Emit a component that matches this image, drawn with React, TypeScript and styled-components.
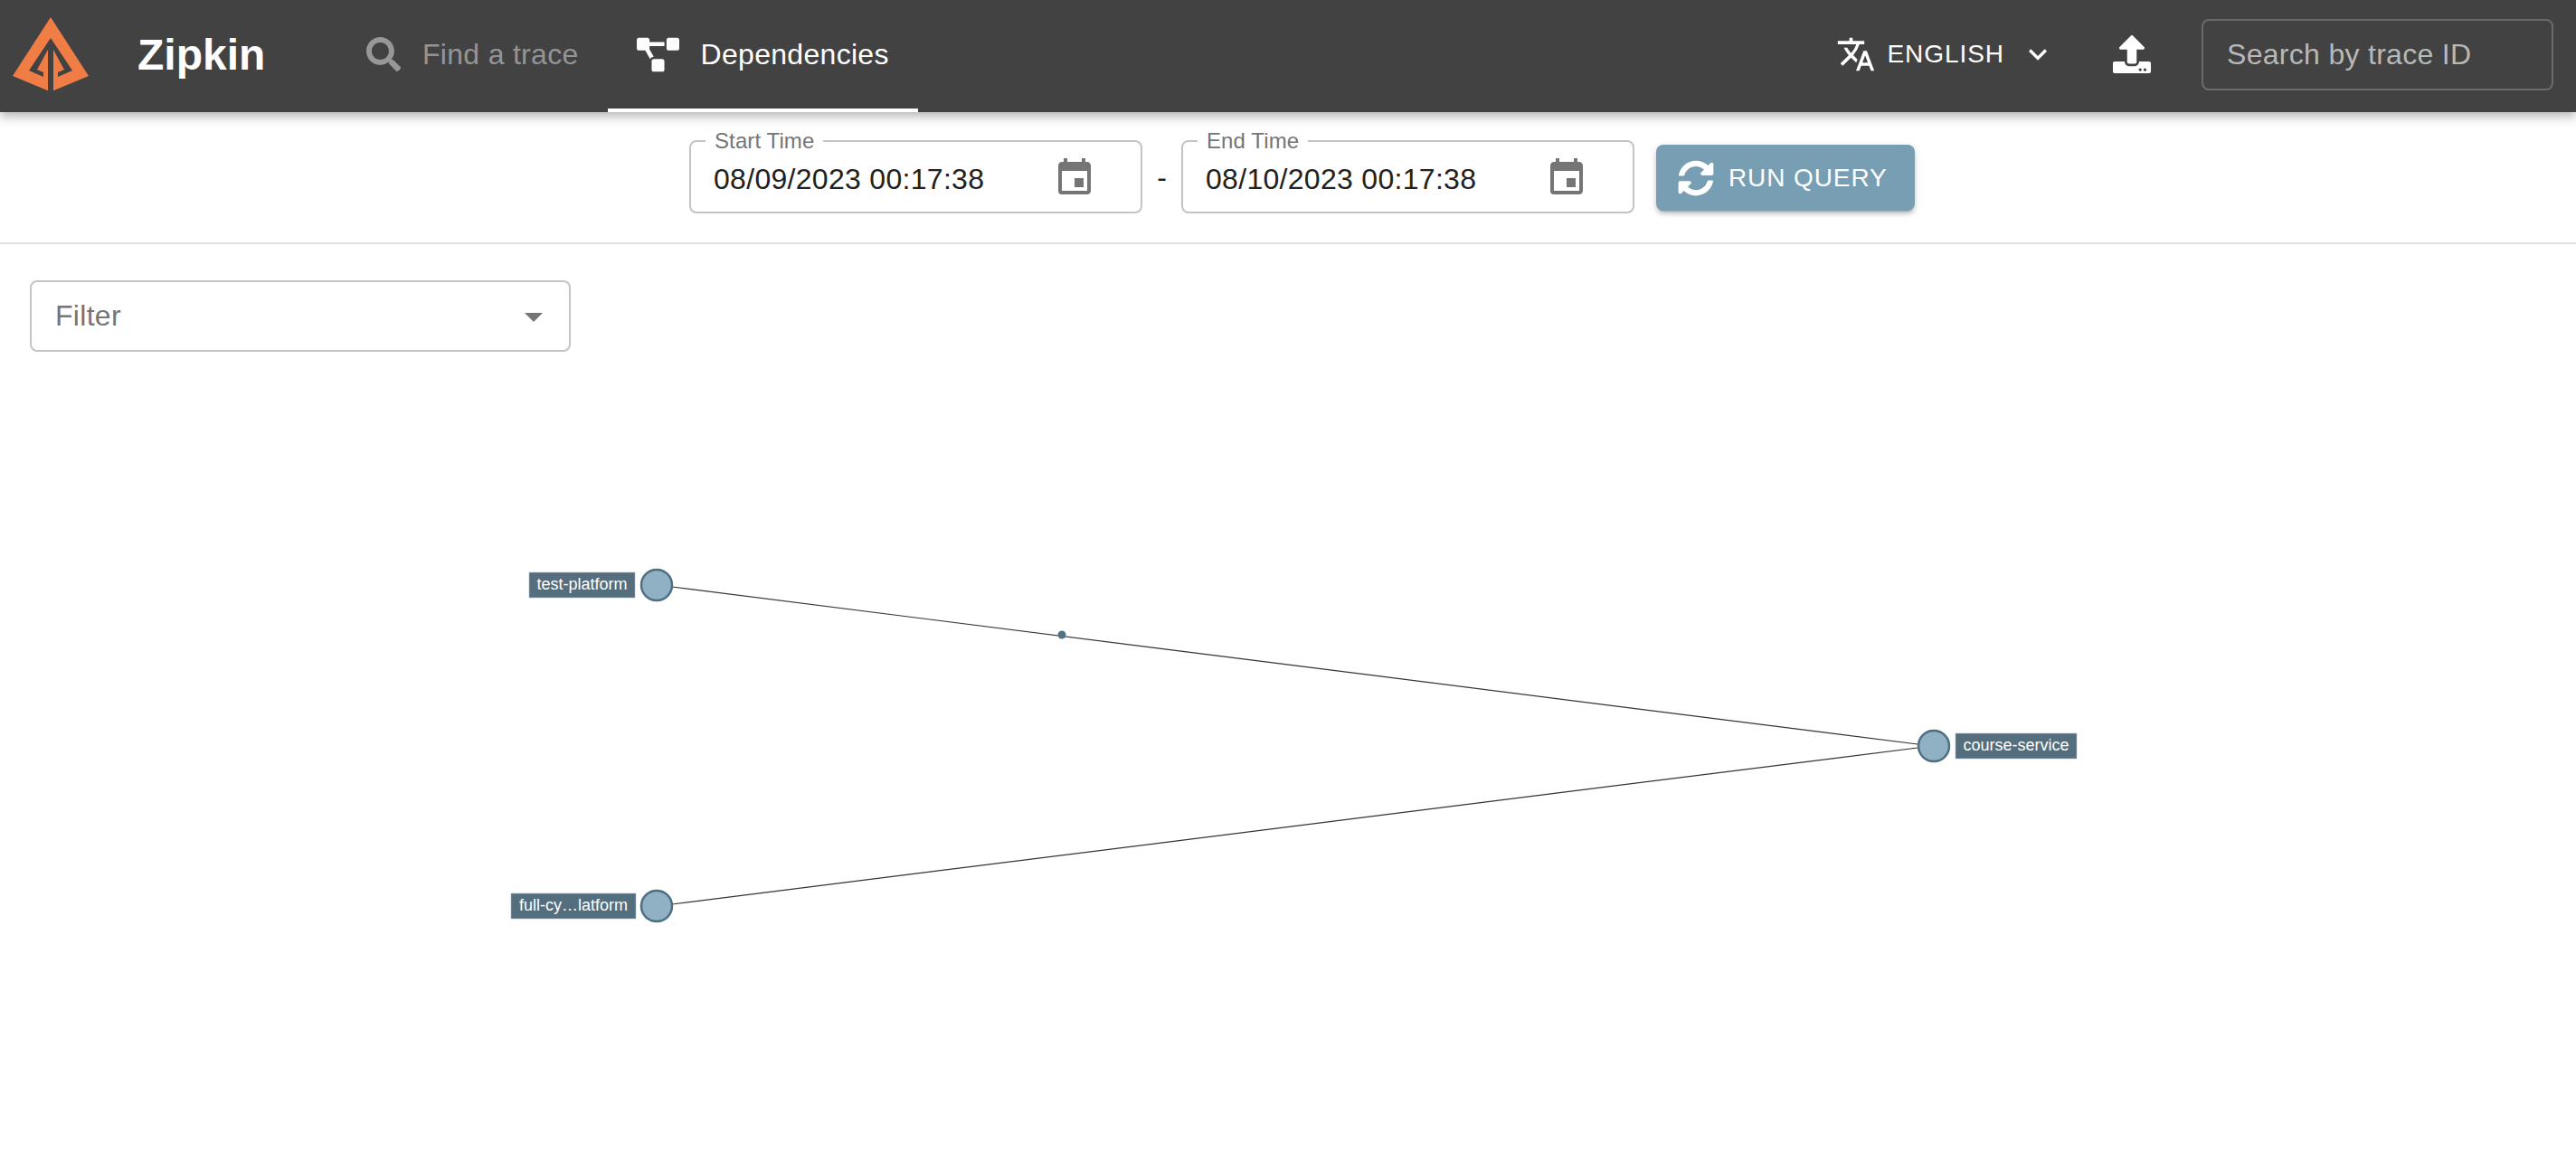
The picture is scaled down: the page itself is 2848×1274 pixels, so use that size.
import React from "react";
import styled, { createGlobalStyle } from "styled-components";
import { FaSearch, FaProjectDiagram, FaUpload, FaSyncAlt } from "react-icons/fa";
import { MdTranslate, MdEvent, MdArrowDropDown, MdExpandMore } from "react-icons/md";

const Global = createGlobalStyle`
  html, body { margin: 0; padding: 0; background: #fff; }
  body { font-family: "Liberation Sans", Arial, sans-serif; width: 2848px; height: 1274px; overflow: hidden; }
  * { box-sizing: border-box; }
`;

const Page = styled.div`
  width: 2848px;
  height: 1274px;
  display: flex;
  flex-direction: column;
`;

const Header = styled.header`
  height: 124px;
  flex: none;
  background: #424242;
  display: flex;
  align-items: stretch;
  padding-right: 25px;
  box-shadow: 0 4px 8px -2px rgba(0, 0, 0, 0.2), 0 8px 10px 1px rgba(0, 0, 0, 0.12);
  position: relative;
  z-index: 1;
`;

const LogoMark = styled.svg`
  width: 112px;
  height: 112px;
  flex: none;
  display: block;
`;

const Brand = styled.div`
  display: flex;
  align-items: center;
  color: #fff;
  font-size: 48px;
  font-weight: 700;
  margin-left: 40px;
  padding-bottom: 4px;
  width: 139px;
  white-space: nowrap;
`;

const Tabs = styled.nav`
  display: flex;
  margin-left: 82px;
`;

const Tab = styled.div<{ $active?: boolean }>`
  display: flex;
  align-items: center;
  gap: 24px;
  padding: 0 32px;
  font-size: 32px;
  letter-spacing: 0.3px;
  white-space: nowrap;
  color: ${(p) => (p.$active ? "#fff" : "rgba(255,255,255,0.45)")};
  border-bottom: 4px solid ${(p) => (p.$active ? "#fff" : "transparent")};
`;

const RightGroup = styled.div`
  margin-left: auto;
  display: flex;
  align-items: center;
  padding-bottom: 4px;
`;

const Language = styled.div`
  display: flex;
  align-items: center;
  color: #fff;
  font-size: 28px;
  letter-spacing: 0.95px;
  white-space: nowrap;
`;

const LangText = styled.span`
  margin-left: 12px;
`;

const LangCaret = styled.span`
  margin-left: 17px;
  display: flex;
`;

const UploadButton = styled.div`
  margin-left: 63px;
  display: flex;
  color: #fff;
`;

const TraceSearch = styled.input`
  margin-left: 56px;
  width: 389px;
  height: 79px;
  background: transparent;
  border: 2px solid #6b6b6b;
  border-radius: 8px;
  padding: 0 26px;
  color: #fff;
  font: 32px "Liberation Sans", Arial, sans-serif;
  letter-spacing: 0.3px;
  outline: none;
  &::placeholder {
    color: #b8b8b8;
    opacity: 1;
  }
`;

const QueryBar = styled.section`
  height: 146px;
  flex: none;
  border-bottom: 2px solid #e0e0e0;
  display: flex;
  justify-content: center;
  align-items: flex-start;
  padding: 21px 0 0 31px;
`;

const DateField = styled.fieldset`
  margin: 0;
  width: 501px;
  height: 91px;
  border: 2px solid #c4c4c4;
  border-radius: 8px;
  padding: 0 18px 5px 25px;
  display: flex;
  align-items: center;
  justify-content: space-between;
  min-width: 0;
`;

const DateLegend = styled.legend`
  font-size: 24px;
  line-height: 22px;
  letter-spacing: 0.1px;
  color: #757575;
  padding: 0 10px;
  margin-left: -9px;
`;

const DateInput = styled.input`
  border: 0;
  outline: 0;
  padding: 0;
  background: transparent;
  width: 340px;
  color: #212121;
  font: 32px "Liberation Sans", Arial, sans-serif;
  letter-spacing: 0.3px;
`;

const CalIcon = styled.span`
  color: #757575;
  display: flex;
  margin: 0 31px 2px 0;
`;

const Dash = styled.div`
  width: 43px;
  text-align: center;
  font-size: 32px;
  color: #212121;
  padding-top: 33px;
`;

const RunButton = styled.div`
  margin: 15px 0 0 24px;
  width: 286px;
  height: 73px;
  display: flex;
  align-items: center;
  padding-left: 24px;
  gap: 16px;
  border-radius: 8px;
  background: #779eb3;
  color: #fff;
  font-size: 28px;
  letter-spacing: 0.9px;
  white-space: nowrap;
  box-shadow: 0 3px 2px -2px rgba(0, 0, 0, 0.2), 0 4px 4px 0 rgba(0, 0, 0, 0.14), 0 2px 10px 0 rgba(0, 0, 0, 0.12);
`;

const FilterRow = styled.section`
  height: 120px;
  flex: none;
  padding: 40px 0 0 33px;
`;

const FilterBox = styled.div`
  width: 598px;
  height: 79px;
  border: 2px solid #c4c4c4;
  border-radius: 8px;
  display: flex;
  align-items: center;
  justify-content: space-between;
  padding: 0 15px 0 26px;
  font-size: 32px;
  letter-spacing: 0.3px;
  color: #757575;
`;

const FilterCaret = styled.span`
  display: flex;
  color: #757575;
`;

const Graph = styled.svg`
  display: block;
  width: 2848px;
  height: 884px;
  flex: none;
`;

const Edge = styled.line`
  stroke: #333;
  stroke-width: 1.2;
`;

const NodeCircle = styled.circle`
  fill: #90b1c3;
  stroke: #4f6f80;
  stroke-width: 2.5;
`;

const NodeBg = styled.rect`
  fill: #546e7d;
  stroke: #a9bbc5;
  stroke-width: 0.6;
`;

const NodeText = styled.text`
  fill: #fff;
  font: 18px "Liberation Sans", Arial, sans-serif;
  dominant-baseline: central;
  text-anchor: middle;
`;

const Particle = styled.circle`
  fill: #517184;
`;

type NodeProps = { cx: number; cy: number; x: number; w: number; label: string };

function GraphNode({ cx, cy, x, w, label }: NodeProps) {
  return (
    <g>
      <NodeCircle cx={cx} cy={cy} r={17} />
      <NodeBg x={x} y={cy - 14} width={w} height={28} />
      <NodeText x={x + w / 2} y={cy - 1}>{label}</NodeText>
    </g>
  );
}

export default function App() {
  return (
    <Page>
      <Global />
      <Header>
        <LogoMark viewBox="0 0 112 112">
          <path fill="#f07c46" d="M56 19L98 84L56 101.5L14 84Z" />
          <path fill="#424242" d="M56 42L80 78L64 85V80L71 77L59 55V102H53V55L41 77L48 80V85L32 78Z" />
        </LogoMark>
        <Brand>Zipkin</Brand>
        <Tabs>
          <Tab>
            <FaSearch size={38} color="rgba(255,255,255,0.45)" />
            Find a trace
          </Tab>
          <Tab $active>
            <FaProjectDiagram size={47} />
            Dependencies
          </Tab>
        </Tabs>
        <RightGroup>
          <Language>
            <MdTranslate size={44} />
            <LangText>ENGLISH</LangText>
            <LangCaret><MdExpandMore size={40} /></LangCaret>
          </Language>
          <UploadButton><FaUpload size={42} /></UploadButton>
          <TraceSearch placeholder="Search by trace ID" />
        </RightGroup>
      </Header>
      <QueryBar>
        <DateField>
          <DateLegend>Start Time</DateLegend>
          <DateInput readOnly value="08/09/2023 00:17:38" />
          <CalIcon><MdEvent size={48} /></CalIcon>
        </DateField>
        <Dash>-</Dash>
        <DateField>
          <DateLegend>End Time</DateLegend>
          <DateInput readOnly value="08/10/2023 00:17:38" />
          <CalIcon><MdEvent size={48} /></CalIcon>
        </DateField>
        <RunButton>
          <FaSyncAlt size={40} />
          RUN QUERY
        </RunButton>
      </QueryBar>
      <FilterRow>
        <FilterBox>
          Filter
          <FilterCaret><MdArrowDropDown size={48} /></FilterCaret>
        </FilterBox>
      </FilterRow>
      <Graph viewBox="0 0 2848 884">
        <Edge x1={743} y1={259} x2={2120} y2={433} />
        <Edge x1={743} y1={610} x2={2120} y2={437} />
        <Particle cx={1174} cy={312} r={4.5} />
        <GraphNode cx={726} cy={257} x={585} w={117} label="test-platform" />
        <GraphNode cx={726} cy={612} x={565} w={138} label="full-cy…latform" />
        <GraphNode cx={2138} cy={435} x={2162} w={134} label="course-service" />
      </Graph>
    </Page>
  );
}
